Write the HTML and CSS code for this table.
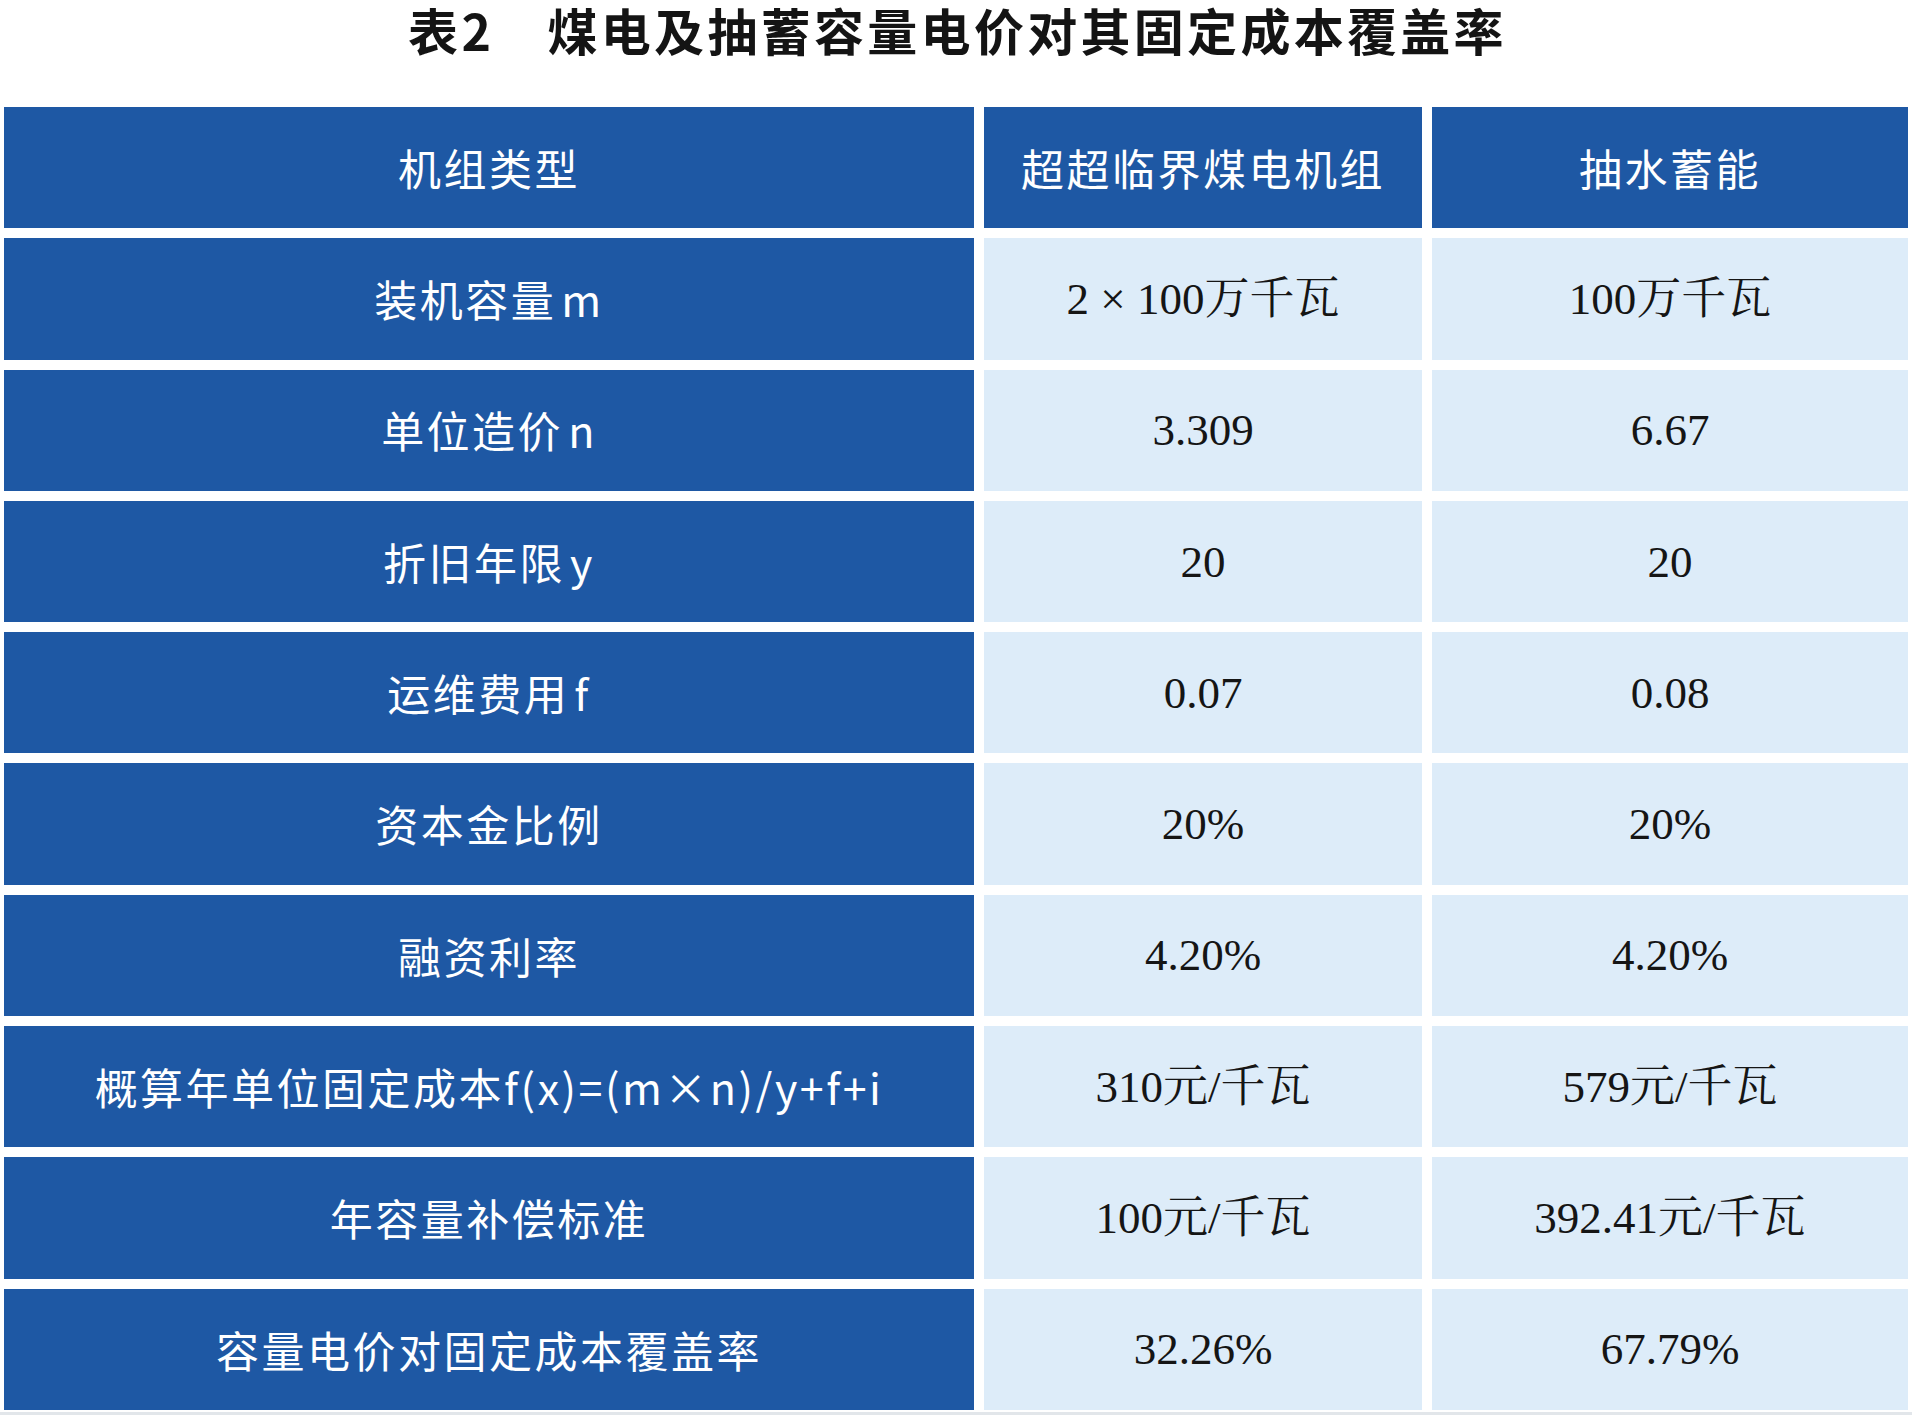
FILE: index.html
```html
<!DOCTYPE html>
<html lang="zh-CN">
<head>
<meta charset="utf-8">
<title>表2 煤电及抽蓄容量电价对其固定成本覆盖率</title>
<link rel="stylesheet" href="styles.css">
</head>
<body>
<div class="page">
  <h1 class="title">表2　煤电及抽蓄容量电价对其固定成本覆盖率</h1>
  <div class="table">
    <div class="cell head">机组类型</div>
    <div class="cell head">超超临界煤电机组</div>
    <div class="cell head">抽水蓄能</div>

    <div class="cell label">装机容量<span class="var">m</span></div>
    <div class="cell value">2 × 100万千瓦</div>
    <div class="cell value">100万千瓦</div>

    <div class="cell label">单位造价<span class="var">n</span></div>
    <div class="cell value">3.309</div>
    <div class="cell value">6.67</div>

    <div class="cell label">折旧年限<span class="var">y</span></div>
    <div class="cell value">20</div>
    <div class="cell value">20</div>

    <div class="cell label">运维费用<span class="var">f</span></div>
    <div class="cell value">0.07</div>
    <div class="cell value">0.08</div>

    <div class="cell label">资本金比例</div>
    <div class="cell value">20%</div>
    <div class="cell value">20%</div>

    <div class="cell label">融资利率</div>
    <div class="cell value">4.20%</div>
    <div class="cell value">4.20%</div>

    <div class="cell label">概算年单位固定成本f(x)=(m×n)/y+f+i</div>
    <div class="cell value">310元/千瓦</div>
    <div class="cell value">579元/千瓦</div>

    <div class="cell label">年容量补偿标准</div>
    <div class="cell value">100元/千瓦</div>
    <div class="cell value">392.41元/千瓦</div>

    <div class="cell label">容量电价对固定成本覆盖率</div>
    <div class="cell value">32.26%</div>
    <div class="cell value">67.79%</div>
  </div>
  <div class="footer-line"></div>
</div>
</body>
</html>
```

FILE: styles.css
```css
html, body {
  margin: 0;
  padding: 0;
  background: #ffffff;
}

.page {
  width: 1912px;
  height: 1416px;
  display: flex;
  flex-direction: column;
  overflow: hidden;
}

.title {
  margin: 0;
  height: 58px;
  line-height: 58px;
  text-align: center;
  font-family: "Noto Sans CJK SC", "Noto Sans", sans-serif;
  font-weight: 700;
  font-size: 50px;
  letter-spacing: 3.3px;
  color: #141414;
  padding-left: 3px;
}

.table {
  margin: 49px 4px 0 4px;
  display: grid;
  grid-template-columns: 970px 438px 476px;
  grid-auto-rows: 121.3px;
  column-gap: 10px;
  row-gap: 10px;
}

.cell {
  display: flex;
  align-items: center;
  justify-content: center;
  white-space: nowrap;
}

.head,
.label {
  background: #1e58a4;
  color: #ffffff;
  font-family: "Noto Sans CJK SC", "Noto Sans", sans-serif;
  font-size: 43px;
  letter-spacing: 2.5px;
  line-height: 1.2;
}

.var {
  margin-left: 5px;
}

.value {
  background: #ddecf9;
  color: #151515;
  font-family: "Liberation Serif", "Noto Serif CJK SC", "Noto Sans CJK SC", serif;
  font-size: 45px;
  line-height: 1.2;
}

.footer-line {
  margin-top: 2px;
  height: 3px;
  background: #e2e6ea;
}
```
